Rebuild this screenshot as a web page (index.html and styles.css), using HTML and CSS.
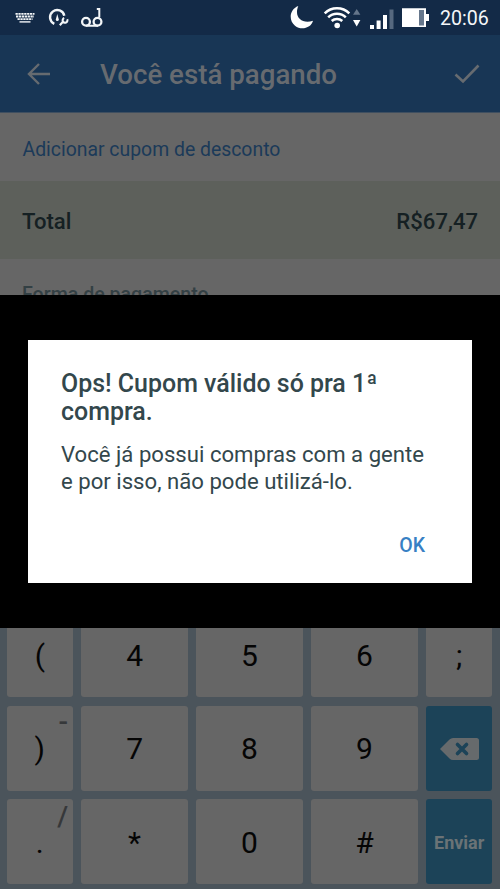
FILE: index.html
```html
<!DOCTYPE html>
<html lang="pt-BR">
<head>
<meta charset="utf-8">
<title>Você está pagando</title>
<link rel="stylesheet" href="styles.css">
</head>
<body>
<div class="screen">
  <header class="status">
    <svg class="notifications" viewBox="0 0 120 35" fill="none" stroke="#f3f6f8">
      <path d="M15.500 13.900h19M16 16.500h18M17.500 19.100h15" stroke-width="1.900" stroke-dasharray="2.300 .6"/>
      <path d="M19.500 21.900h11" stroke-width="1.400"/>
      <path d="M54.300 23.800A7.200 7.200 0 1 1 64.300 15.800" stroke-width="2.400"/>
      <path d="M57.300 14l1.500 5.500a1.500 1.500 0 0 1-3 0z" fill="#f3f6f8" stroke="none"/>
      <path d="M59.800 25.300l3.600-4M67.200 19.300a2.400 2.400 0 1 1-3-1.200" stroke-width="2.100"/>
      <circle cx="86" cy="21.800" r="3.900" stroke-width="2.300"/>
      <circle cx="97.500" cy="21.800" r="3.900" stroke-width="2.300"/>
      <path d="M86 25.800h12M96.800 9h2.500v8" stroke-width="2"/>
    </svg>
    <svg class="indicators" viewBox="0 0 150 35">
      <path d="M8.300 6C-.8 9.500-1.500 20.500 5 25.700C11.500 31 21.500 27.500 23 20.700C12.500 24.500 3.500 17.500 8.300 6z" fill="#fff"/>
      <g fill="none" stroke="#fff" stroke-width="2.500">
        <path d="M34.700 13.300a17.500 17.500 0 0 1 24.600 0M38.200 17.300a12.500 12.500 0 0 1 17.600 0M41.700 21a7.800 7.800 0 0 1 10.600 0"/>
      </g>
      <circle cx="47.200" cy="25.500" r="2.800" fill="#fff"/>
      <path d="M63 14.800h7.400L66.700 9z" fill="#64758a"/>
      <path d="M63 20h7.400l-3.700 6.500z" fill="#fff"/>
      <path d="M80 25h4v4h-4zM86.600 20.500h4V29h-4zM93 15h4v14h-4z" fill="#fff"/>
      <path d="M99.500 9.500h4V29h-4z" fill="#56687f"/>
      <path d="M112 8.300h24V14h3v7h-3v6h-24z" fill="#fff"/>
      <path d="M129 10h5v15.500h-5z" fill="#66778c"/>
    </svg>
    <span class="clock">20:06</span>
  </header>
  <nav class="toolbar">
    <svg class="back" viewBox="0 0 24 22" fill="none" stroke="#666b70" stroke-width="2.400"><path d="M23 11H2M12 1L2 11l10 10"/></svg>
    <h1 class="toolbar-title"><span>Você está pagando</span></h1>
    <svg class="check" viewBox="0 0 26 20" fill="none" stroke="#666b70" stroke-width="2.600"><path d="M1.500 10.500L9 17.500 24.500 1.500"/></svg>
  </nav>
  <main class="checkout">
    <div class="coupon"><span>Adicionar cupom de desconto</span></div>
    <div class="total"><span class="total-label">Total</span><span class="total-value">R$67,47</span></div>
    <div class="payment"><span>Forma de pagamento</span></div>
  </main>
  <div class="stage">
    <section class="dialog" role="dialog">
      <h2 class="dialog-title">Ops! Cupom válido só pra 1ª<br>compra.</h2>
      <p class="dialog-text">Você já possui compras com a gente<br>e por isso, não pode utilizá-lo.</p>
      <button class="ok">OK</button>
    </section>
  </div>
  <div class="keyboard">
    <div class="key cut">(</div><div class="key cut">4</div><div class="key cut">5</div><div class="key cut">6</div><div class="key cut">;</div>
    <div class="key">)<span class="hint dash">-</span></div><div class="key">7</div><div class="key">8</div><div class="key">9</div>
    <div class="key action">
      <svg class="erase" viewBox="0 0 40 22"><path d="M1 11L10.500 1.500Q12 0 14 0H37.500Q40 0 40 2.500V19.500Q40 22 37.500 22H14Q12 22 10.500 20.500z" fill="#666a6c"/><path d="M18.500 6.500l9 9m0-9l-9 9" stroke="#1c4358" stroke-width="3.600" stroke-linecap="round"/></svg>
    </div>
    <div class="key">.<span class="hint">/</span></div><div class="key star">*</div><div class="key">0</div><div class="key">#</div><div class="key action send">Enviar</div>
  </div>
</div>
</body>
</html>
```
FILE: styles.css
```css
* { box-sizing: border-box; }
body { margin: 0; background: #000; font-family: Roboto, "Liberation Sans", sans-serif; }
.screen { width: 500px; height: 889px; display: flex; flex-direction: column; overflow: hidden; white-space: nowrap; }
h1, h2, p { margin: 0; }
.status { height: 35px; flex: none; display: flex; background: #132a47; }
.notifications { width: 120px; height: 35px; }
.indicators { width: 150px; height: 35px; margin-left: 170px; }
.clock { color: #f5f7f9; font-size: 19.6px; line-height: 37px; }
.toolbar { height: 78px; flex: none; display: flex; align-items: center; background: #183655; border-bottom: 1px solid #3f4f60; }
.back { width: 24px; height: 22px; margin-left: 27px; }
.toolbar-title { margin-left: 49px; padding-top: 2px; flex: 1; color: #676b70; font-size: 27.7px; line-height: 36px; font-weight: 500; }
.check { width: 26px; height: 20px; margin-right: 20px; }
.checkout { height: 182px; flex: none; overflow: hidden; background: #666; }
.coupon { height: 68px; padding-left: 22.500px; color: #1b3a59; font-size: 19.4px; line-height: 74px; }
.total { height: 78px; padding: 0 22px; display: flex; justify-content: space-between; background: #5d605b; color: #152023; font-size: 22.1px; line-height: 81px; font-weight: 500; }
.payment { padding: 22px 22px 0; color: #334044; font-size: 19.6px; line-height: 27px; font-weight: 500; }
.stage { height: 333px; flex: none; padding: 45px 28px; background: #000; }
.dialog { height: 243px; padding: 30px 47px 0 33px; display: flex; flex-direction: column; background: #fff; color: #33474c; }
.dialog-title { font-size: 24.95px; line-height: 28px; font-weight: 500; }
.dialog-text { margin-top: 15px; font-size: 22.150px; line-height: 27px; }
.ok { align-self: flex-end; margin-top: 38px; padding: 0; border: 0; background: none; color: #3880c4; font: 500 19.500px/26px Roboto, sans-serif; }
.keyboard { flex: 1; padding: 0 7.500px 5px 6.500px; display: grid; grid-template-columns: 66.600px 106.900px 106.900px 106.900px 66.600px; grid-template-rows: 69px 85px 85px; row-gap: 8.500px; justify-content: space-between; background: #4b545b; }
.key { position: relative; display: flex; align-items: center; justify-content: center; border-radius: 3px; background: #666; color: #050505; font-size: 30px; line-height: 36px; padding-top: 2px; }
.cut { height: 69px; padding: 0 0 13px; border-radius: 0 0 3px 3px; }
.hint { position: absolute; right: 5px; top: 0; color: #36383a; font-size: 28px; line-height: 36px; font-weight: 500; }
.dash { top: -2px; }
.action { background: #1c4358; }
.erase { width: 40px; height: 22px; }
.send { color: #6b7376; font-size: 18px; font-weight: 700; }
```
